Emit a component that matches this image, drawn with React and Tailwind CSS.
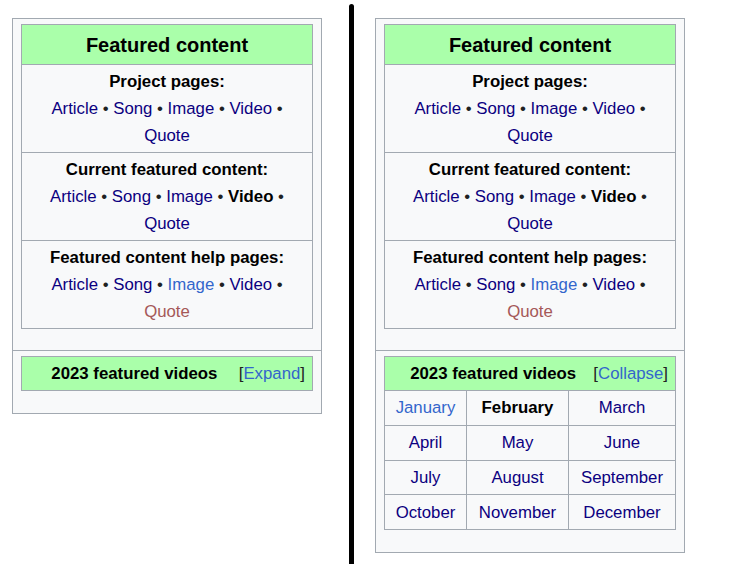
import { useState } from "react";

const dark = "text-[#0b0080]";
const blue = "text-[#3366cc]";
const red = "text-[#a55858]";

const Sep = () => <span className="text-[#202122]"> • </span>;

const LinkRow = ({ items }) => (
  <div className="leading-[27px]">
    {items.map((it, i) => (
      <span key={it.label}>
        <a href="#" className={it.bold ? "font-bold text-black" : it.color}>
          {it.label}
        </a>
        {i < items.length - 1 && <Sep />}
        {i === items.length - 2 && " "}
      </span>
    ))}
  </div>
);

const sections = [
  {
    title: "Project pages:",
    items: [
      { label: "Article", color: dark },
      { label: "Song", color: dark },
      { label: "Image", color: dark },
      { label: "Video", color: dark },
      { label: "Quote", color: dark },
    ],
  },
  {
    title: "Current featured content:",
    items: [
      { label: "Article", color: dark },
      { label: "Song", color: dark },
      { label: "Image", color: dark },
      { label: "Video", bold: true },
      { label: "Quote", color: dark },
    ],
  },
  {
    title: "Featured content help pages:",
    items: [
      { label: "Article", color: dark },
      { label: "Song", color: dark },
      { label: "Image", color: blue },
      { label: "Video", color: dark },
      { label: "Quote", color: red },
    ],
  },
];

const months = [
  { label: "January", color: blue },
  { label: "February", bold: true },
  { label: "March" },
  { label: "April" },
  { label: "May" },
  { label: "June" },
  { label: "July" },
  { label: "August" },
  { label: "September" },
  { label: "October" },
  { label: "November" },
  { label: "December" },
];

function FeaturedBox({ startOpen }) {
  const [open, setOpen] = useState(startOpen);

  return (
    <div className="w-[310px] border border-[#a2a9b1] bg-[#f8f9fa] text-[16.8px] text-[#202122]">
      {/* main table */}
      <div className="px-2 pt-[5px] pb-[21px]">
        <div className="border border-[#a2a9b1]">
          <div className="h-[40px] bg-[#aaffaa] border-b border-[#a2a9b1] flex items-center justify-center text-[20px] font-bold text-black">
            Featured content
          </div>
          {sections.map((s, i) => (
            <div
              key={s.title}
              className={`px-3 pt-[3px] pb-[3px] text-center ${i > 0 ? "border-t border-[#a2a9b1]" : ""}`}
            >
              <div className="leading-[27px] font-bold text-black">{s.title}</div>
              <LinkRow items={s.items} />
            </div>
          ))}
        </div>
      </div>

      {/* collapsible yearly table */}
      <div className="border-t border-[#a2a9b1] px-2 pt-[5px] pb-[22px]">
        <div className="border border-[#a2a9b1]">
          <div className="h-[33px] bg-[#aaffaa] flex items-center">
            <div className="flex-1 text-center font-bold text-black">2023 featured videos</div>
            <div className="ml-[-8px] pr-[7px]">
              [
              <button className="text-[#3366cc] cursor-pointer" onClick={() => setOpen(!open)}>
                {open ? "Collapse" : "Expand"}
              </button>
              ]
            </div>
          </div>
          {open && (
            <div className="grid grid-cols-[81px_102px_1fr]">
              {months.map((m, i) => (
                <div
                  key={m.label}
                  className={`h-[34.75px] flex items-center justify-center border-t border-[#a2a9b1] ${i % 3 !== 0 ? "border-l" : ""}`}
                >
                  <a href="#" className={m.bold ? "font-bold text-black" : m.color || dark}>
                    {m.label}
                  </a>
                </div>
              ))}
            </div>
          )}
        </div>
      </div>
    </div>
  );
}

export default function App() {
  return (
    <div
      className="flex items-start h-[564px] bg-white"
      style={{ fontFamily: '"Liberation Sans", Arial, sans-serif' }}
    >
      <div className="ml-3 mt-[18px]">
        <FeaturedBox startOpen={false} />
      </div>
      <div className="ml-[27px] mt-1 self-stretch w-[5px] bg-black rounded-t-sm" />
      <div className="ml-[21px] mt-[18px]">
        <FeaturedBox startOpen={true} />
      </div>
    </div>
  );
}
